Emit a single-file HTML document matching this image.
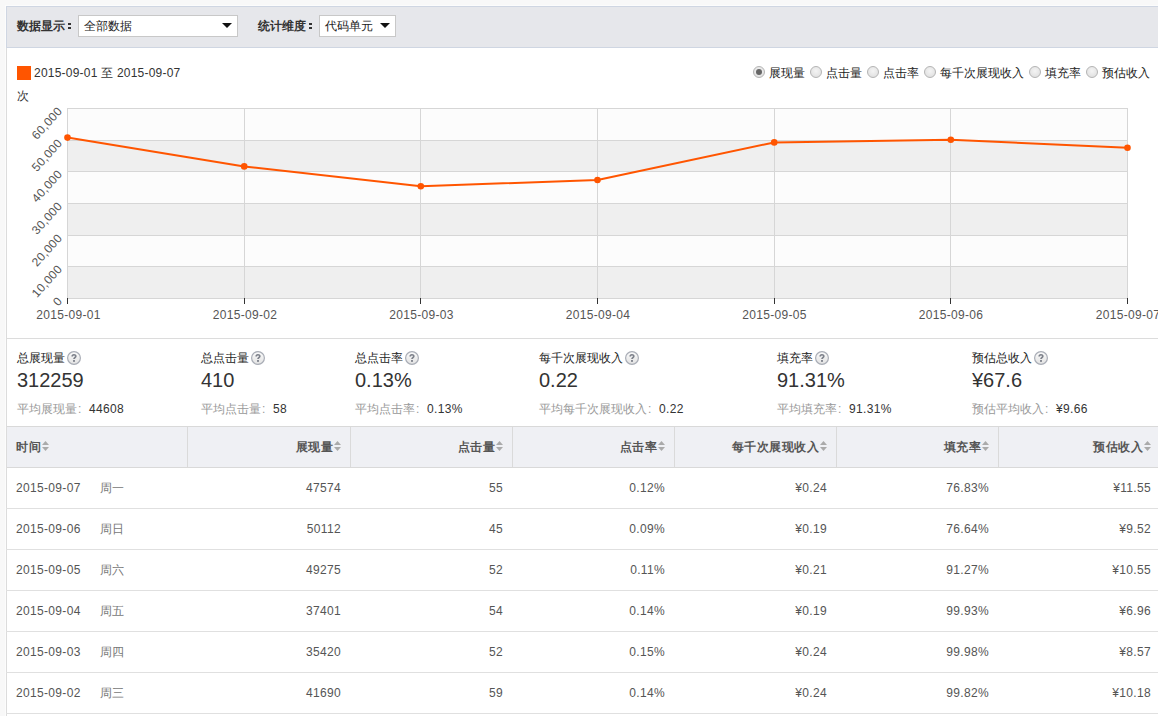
<!DOCTYPE html>
<html><head><meta charset="utf-8">
<style>
*{box-sizing:border-box}
html,body{margin:0;padding:0}
body{width:1158px;height:716px;overflow:hidden;background:#f8f8f8;font-family:"Liberation Sans",sans-serif;font-size:12px;color:#333;position:relative}
.a{position:absolute;white-space:nowrap;line-height:14px}
.wrap{position:absolute;left:6px;top:6px;width:1160px;height:720px;background:#fff;border-left:1px solid #dcdcdc}
.filter{position:absolute;left:6px;top:6px;width:1160px;height:42px;background:#e6e7eb;border:1px solid #cfd6e2;border-right:none}
.lbl{font-weight:bold;color:#333}
.cd{position:absolute;width:3px;height:2px;background:#333}
.sel{position:absolute;height:22px;background:#fff;border:1px solid #c8c8c8}
.tri{position:absolute;width:0;height:0;border-left:5px solid transparent;border-right:5px solid transparent;border-top:5px solid #111}
.radio{position:absolute;top:66px;width:12px;height:12px;border-radius:50%;border:1px solid #b4b4b4;background:radial-gradient(circle at 50% 40%,#f4f4f4,#dcdcdc)}
.radio.on::after{content:"";position:absolute;left:2px;top:2px;width:6px;height:6px;border-radius:50%;background:#666}
.rl{top:66px;color:#222}
.q{position:absolute}
.st{color:#222}
.big{font-size:20px;line-height:22px;color:#333}
.avg{color:#999}
.col{display:inline-block;width:12px;font-style:normal;padding-left:1px}
.avg b{font-weight:normal;color:#333;letter-spacing:.33px}
.sep{position:absolute;left:6px;width:1160px;height:1px;background:#dcdcdc}
.thead{position:absolute;left:7px;top:426px;width:1160px;height:42px;background:#eff0f4;border-top:1px solid #d9d9d9;border-bottom:1px solid #d9d9d9}
.vd{position:absolute;top:427px;width:1px;height:40px;background:#dadada}
.th{top:440px;font-weight:bold;color:#555;letter-spacing:.5px}
.sort{position:absolute;width:7px;height:11px}
.row{position:absolute;left:6px;width:1160px;height:1px;background:#e0e0e0}
.td{color:#555;letter-spacing:.33px}
.wk{color:#777}
</style></head><body>
<div style="position:absolute;left:5px;top:5px;width:1160px;height:1px;background:#fcfcfc"></div><div style="position:absolute;left:5px;top:5px;width:1px;height:720px;background:#fcfcfc"></div>
<div class="wrap"></div>
<div class="filter"></div>
<div class="a lbl" style="left:17px;top:19px">数据显示</div>
<i class="cd" style="left:68px;top:23px"></i><i class="cd" style="left:68px;top:27px"></i>
<div class="sel" style="left:78px;top:15px;width:160px"></div>
<div class="a" style="left:84px;top:19px;color:#222">全部数据</div>
<i class="tri" style="left:222px;top:23px"></i>
<div class="a lbl" style="left:258px;top:19px">统计维度</div>
<i class="cd" style="left:309px;top:23px"></i><i class="cd" style="left:309px;top:27px"></i>
<div class="sel" style="left:319px;top:15px;width:77px"></div>
<div class="a" style="left:325px;top:19px;color:#222">代码单元</div>
<i class="tri" style="left:380px;top:23px"></i>

<!-- legend -->
<div style="position:absolute;left:17px;top:66px;width:14px;height:14px;background:#ff5500"></div>
<div class="a" style="left:34px;top:66px;color:#333;letter-spacing:.22px">2015-09-01 至 2015-09-07</div>
<div class="a" style="left:17px;top:89px;color:#333">次</div>

<div class="radio on" style="left:753px"></div><div class="a rl" style="left:769px">展现量</div>
<div class="radio" style="left:810px"></div><div class="a rl" style="left:826px">点击量</div>
<div class="radio" style="left:867px"></div><div class="a rl" style="left:883px">点击率</div>
<div class="radio" style="left:924px"></div><div class="a rl" style="left:940px">每千次展现收入</div>
<div class="radio" style="left:1029px"></div><div class="a rl" style="left:1045px">填充率</div>
<div class="radio" style="left:1086px"></div><div class="a rl" style="left:1102px">预估收入</div>

<svg width="0" height="0" style="position:absolute"><defs><linearGradient id="qg" x1="0" y1="0" x2="0" y2="1"><stop offset="0" stop-color="#fbfbfb"/><stop offset="1" stop-color="#e2e2e2"/></linearGradient></defs></svg>
<!-- CHART -->
<svg style="position:absolute;left:0;top:0" width="1158" height="340">
  <g shape-rendering="crispEdges">
  <rect x="67" y="108" width="1060" height="31.67" fill="#fcfcfc"/>
  <rect x="67" y="139.67" width="1060" height="31.67" fill="#efefef"/>
  <rect x="67" y="171.33" width="1060" height="31.67" fill="#fcfcfc"/>
  <rect x="67" y="203" width="1060" height="31.67" fill="#efefef"/>
  <rect x="67" y="234.67" width="1060" height="31.67" fill="#fcfcfc"/>
  <rect x="67" y="266.33" width="1060" height="31.67" fill="#efefef"/>
  <path d="M67 108.5H1127M67 140.5H1127M67 171.5H1127M67 203.5H1127M67 235.5H1127M67 266.5H1127M67 298.5H1128" stroke="#d6d6d6" stroke-width="1" fill="none"/>
  <path d="M67.5 108V298M244.5 108V298M420.5 108V298M597.5 108V298M774.5 108V298M950.5 108V298M1127.5 108V298" stroke="#d6d6d6" stroke-width="1" fill="none"/>
  <path d="M67.5 298V304M244.5 298V304M420.5 298V304M597.5 298V304M774.5 298V304M950.5 298V304M1127.5 298V304" stroke="#333" stroke-width="1" fill="none"/>
  </g>
  <g font-family="Liberation Sans" font-size="12" fill="#555" text-anchor="end" letter-spacing="0.33">
    <text transform="translate(63,111.5) rotate(-48)">60,000</text>
    <text transform="translate(63,143.5) rotate(-48)">50,000</text>
    <text transform="translate(63,174.5) rotate(-48)">40,000</text>
    <text transform="translate(63,206.5) rotate(-48)">30,000</text>
    <text transform="translate(63,238.5) rotate(-48)">20,000</text>
    <text transform="translate(63,269.5) rotate(-48)">10,000</text>
    <text transform="translate(63,301.5) rotate(-48)">0</text>
  </g>
  <g font-family="Liberation Sans" font-size="12" fill="#555" text-anchor="middle" letter-spacing="0.33">
    <text x="68.5" y="319">2015-09-01</text>
    <text x="245.0" y="319">2015-09-02</text>
    <text x="421.5" y="319">2015-09-03</text>
    <text x="598.0" y="319">2015-09-04</text>
    <text x="774.5" y="319">2015-09-05</text>
    <text x="951.0" y="319">2015-09-06</text>
    <text x="1128.0" y="319">2015-09-07</text>
  </g>
  <polyline points="67.5,137.6 244.2,166.4 420.8,186.2 597.5,180.0 774.2,142.4 950.8,139.7 1127.5,147.7" fill="none" stroke="#ff5500" stroke-width="2" stroke-linejoin="round"/>
  <g fill="#ff5500">
    <circle cx="67.5" cy="137.6" r="3.3"/><circle cx="244.2" cy="166.4" r="3.3"/><circle cx="420.8" cy="186.2" r="3.3"/><circle cx="597.5" cy="180.0" r="3.3"/><circle cx="774.2" cy="142.4" r="3.3"/><circle cx="950.8" cy="139.7" r="3.3"/><circle cx="1127.5" cy="147.7" r="3.3"/>
  </g>
</svg>

<div class="sep" style="top:338px"></div>

<!-- STATS -->
<div class="a st" style="left:17px;top:351px">总展现量</div><svg class="q" style="left:67px;top:351px" width="14" height="14" viewBox="0 0 14 14"><circle cx="7" cy="7" r="6.4" fill="url(#qg)" stroke="#a9adb6" stroke-width="1.2"/><path d="M5.2 5.5C5.2 3.2 8.8 3.2 8.8 5.3C8.8 6.7 7 6.7 7 8.1" fill="none" stroke="#7c808a" stroke-width="1.7"/><rect x="6.1" y="9" width="1.8" height="1.9" fill="#7c808a"/></svg>
<div class="a big" style="left:17px;top:369px">312259</div>
<div class="a avg" style="left:17px;top:402px">平均展现量<i class="col">:</i><b>44608</b></div>

<div class="a st" style="left:201px;top:351px">总点击量</div><svg class="q" style="left:251px;top:351px" width="14" height="14" viewBox="0 0 14 14"><circle cx="7" cy="7" r="6.4" fill="url(#qg)" stroke="#a9adb6" stroke-width="1.2"/><path d="M5.2 5.5C5.2 3.2 8.8 3.2 8.8 5.3C8.8 6.7 7 6.7 7 8.1" fill="none" stroke="#7c808a" stroke-width="1.7"/><rect x="6.1" y="9" width="1.8" height="1.9" fill="#7c808a"/></svg>
<div class="a big" style="left:201px;top:369px">410</div>
<div class="a avg" style="left:201px;top:402px">平均点击量<i class="col">:</i><b>58</b></div>

<div class="a st" style="left:355px;top:351px">总点击率</div><svg class="q" style="left:405px;top:351px" width="14" height="14" viewBox="0 0 14 14"><circle cx="7" cy="7" r="6.4" fill="url(#qg)" stroke="#a9adb6" stroke-width="1.2"/><path d="M5.2 5.5C5.2 3.2 8.8 3.2 8.8 5.3C8.8 6.7 7 6.7 7 8.1" fill="none" stroke="#7c808a" stroke-width="1.7"/><rect x="6.1" y="9" width="1.8" height="1.9" fill="#7c808a"/></svg>
<div class="a big" style="left:355px;top:369px">0.13%</div>
<div class="a avg" style="left:355px;top:402px">平均点击率<i class="col">:</i><b>0.13%</b></div>

<div class="a st" style="left:539px;top:351px">每千次展现收入</div><svg class="q" style="left:625px;top:351px" width="14" height="14" viewBox="0 0 14 14"><circle cx="7" cy="7" r="6.4" fill="url(#qg)" stroke="#a9adb6" stroke-width="1.2"/><path d="M5.2 5.5C5.2 3.2 8.8 3.2 8.8 5.3C8.8 6.7 7 6.7 7 8.1" fill="none" stroke="#7c808a" stroke-width="1.7"/><rect x="6.1" y="9" width="1.8" height="1.9" fill="#7c808a"/></svg>
<div class="a big" style="left:539px;top:369px">0.22</div>
<div class="a avg" style="left:539px;top:402px">平均每千次展现收入<i class="col">:</i><b>0.22</b></div>

<div class="a st" style="left:777px;top:351px">填充率</div><svg class="q" style="left:815px;top:351px" width="14" height="14" viewBox="0 0 14 14"><circle cx="7" cy="7" r="6.4" fill="url(#qg)" stroke="#a9adb6" stroke-width="1.2"/><path d="M5.2 5.5C5.2 3.2 8.8 3.2 8.8 5.3C8.8 6.7 7 6.7 7 8.1" fill="none" stroke="#7c808a" stroke-width="1.7"/><rect x="6.1" y="9" width="1.8" height="1.9" fill="#7c808a"/></svg>
<div class="a big" style="left:777px;top:369px">91.31%</div>
<div class="a avg" style="left:777px;top:402px">平均填充率<i class="col">:</i><b>91.31%</b></div>

<div class="a st" style="left:972px;top:351px">预估总收入</div><svg class="q" style="left:1034px;top:351px" width="14" height="14" viewBox="0 0 14 14"><circle cx="7" cy="7" r="6.4" fill="url(#qg)" stroke="#a9adb6" stroke-width="1.2"/><path d="M5.2 5.5C5.2 3.2 8.8 3.2 8.8 5.3C8.8 6.7 7 6.7 7 8.1" fill="none" stroke="#7c808a" stroke-width="1.7"/><rect x="6.1" y="9" width="1.8" height="1.9" fill="#7c808a"/></svg>
<div class="a big" style="left:972px;top:369px">¥67.6</div>
<div class="a avg" style="left:972px;top:402px">预估平均收入<i class="col">:</i><b>¥9.66</b></div>

<!-- TABLE -->
<div class="thead"></div>
<div class="vd" style="left:187px"></div>
<div class="vd" style="left:350px"></div>
<div class="vd" style="left:512px"></div>
<div class="vd" style="left:674px"></div>
<div class="vd" style="left:836px"></div>
<div class="vd" style="left:998px"></div>
<!-- ROWS -->
<div class="a th" style="left:16px">时间</div><svg class="sort" style="left:42px;top:441px" width="7" height="11" viewBox="0 0 7 11"><path d="M3.5 0L7 4H0Z M0 6H7L3.5 10Z" fill="#aaa"/></svg>
<div class="a th" style="right:825px">展现量</div><svg class="sort" style="left:334px;top:441px" width="7" height="11" viewBox="0 0 7 11"><path d="M3.5 0L7 4H0Z M0 6H7L3.5 10Z" fill="#aaa"/></svg>
<div class="a th" style="right:663px">点击量</div><svg class="sort" style="left:496px;top:441px" width="7" height="11" viewBox="0 0 7 11"><path d="M3.5 0L7 4H0Z M0 6H7L3.5 10Z" fill="#aaa"/></svg>
<div class="a th" style="right:501px">点击率</div><svg class="sort" style="left:658px;top:441px" width="7" height="11" viewBox="0 0 7 11"><path d="M3.5 0L7 4H0Z M0 6H7L3.5 10Z" fill="#aaa"/></svg>
<div class="a th" style="right:339px">每千次展现收入</div><svg class="sort" style="left:820px;top:441px" width="7" height="11" viewBox="0 0 7 11"><path d="M3.5 0L7 4H0Z M0 6H7L3.5 10Z" fill="#aaa"/></svg>
<div class="a th" style="right:177px">填充率</div><svg class="sort" style="left:982px;top:441px" width="7" height="11" viewBox="0 0 7 11"><path d="M3.5 0L7 4H0Z M0 6H7L3.5 10Z" fill="#aaa"/></svg>
<div class="a th" style="right:15px">预估收入</div><svg class="sort" style="left:1144px;top:441px" width="7" height="11" viewBox="0 0 7 11"><path d="M3.5 0L7 4H0Z M0 6H7L3.5 10Z" fill="#aaa"/></svg>
<div class="row" style="top:508px"></div>
<div class="a td" style="left:16px;top:481px">2015-09-07</div>
<div class="a wk" style="left:100px;top:481px">周一</div>
<div class="a td" style="right:817px;top:481px">47574</div>
<div class="a td" style="right:655px;top:481px">55</div>
<div class="a td" style="right:493px;top:481px">0.12%</div>
<div class="a td" style="right:331px;top:481px">¥0.24</div>
<div class="a td" style="right:169px;top:481px">76.83%</div>
<div class="a td" style="right:7px;top:481px">¥11.55</div>
<div class="row" style="top:549px"></div>
<div class="a td" style="left:16px;top:522px">2015-09-06</div>
<div class="a wk" style="left:100px;top:522px">周日</div>
<div class="a td" style="right:817px;top:522px">50112</div>
<div class="a td" style="right:655px;top:522px">45</div>
<div class="a td" style="right:493px;top:522px">0.09%</div>
<div class="a td" style="right:331px;top:522px">¥0.19</div>
<div class="a td" style="right:169px;top:522px">76.64%</div>
<div class="a td" style="right:7px;top:522px">¥9.52</div>
<div class="row" style="top:590px"></div>
<div class="a td" style="left:16px;top:563px">2015-09-05</div>
<div class="a wk" style="left:100px;top:563px">周六</div>
<div class="a td" style="right:817px;top:563px">49275</div>
<div class="a td" style="right:655px;top:563px">52</div>
<div class="a td" style="right:493px;top:563px">0.11%</div>
<div class="a td" style="right:331px;top:563px">¥0.21</div>
<div class="a td" style="right:169px;top:563px">91.27%</div>
<div class="a td" style="right:7px;top:563px">¥10.55</div>
<div class="row" style="top:631px"></div>
<div class="a td" style="left:16px;top:604px">2015-09-04</div>
<div class="a wk" style="left:100px;top:604px">周五</div>
<div class="a td" style="right:817px;top:604px">37401</div>
<div class="a td" style="right:655px;top:604px">54</div>
<div class="a td" style="right:493px;top:604px">0.14%</div>
<div class="a td" style="right:331px;top:604px">¥0.19</div>
<div class="a td" style="right:169px;top:604px">99.93%</div>
<div class="a td" style="right:7px;top:604px">¥6.96</div>
<div class="row" style="top:672px"></div>
<div class="a td" style="left:16px;top:645px">2015-09-03</div>
<div class="a wk" style="left:100px;top:645px">周四</div>
<div class="a td" style="right:817px;top:645px">35420</div>
<div class="a td" style="right:655px;top:645px">52</div>
<div class="a td" style="right:493px;top:645px">0.15%</div>
<div class="a td" style="right:331px;top:645px">¥0.24</div>
<div class="a td" style="right:169px;top:645px">99.98%</div>
<div class="a td" style="right:7px;top:645px">¥8.57</div>
<div class="row" style="top:713px"></div>
<div class="a td" style="left:16px;top:686px">2015-09-02</div>
<div class="a wk" style="left:100px;top:686px">周三</div>
<div class="a td" style="right:817px;top:686px">41690</div>
<div class="a td" style="right:655px;top:686px">59</div>
<div class="a td" style="right:493px;top:686px">0.14%</div>
<div class="a td" style="right:331px;top:686px">¥0.24</div>
<div class="a td" style="right:169px;top:686px">99.82%</div>
<div class="a td" style="right:7px;top:686px">¥10.18</div>
</body></html>
